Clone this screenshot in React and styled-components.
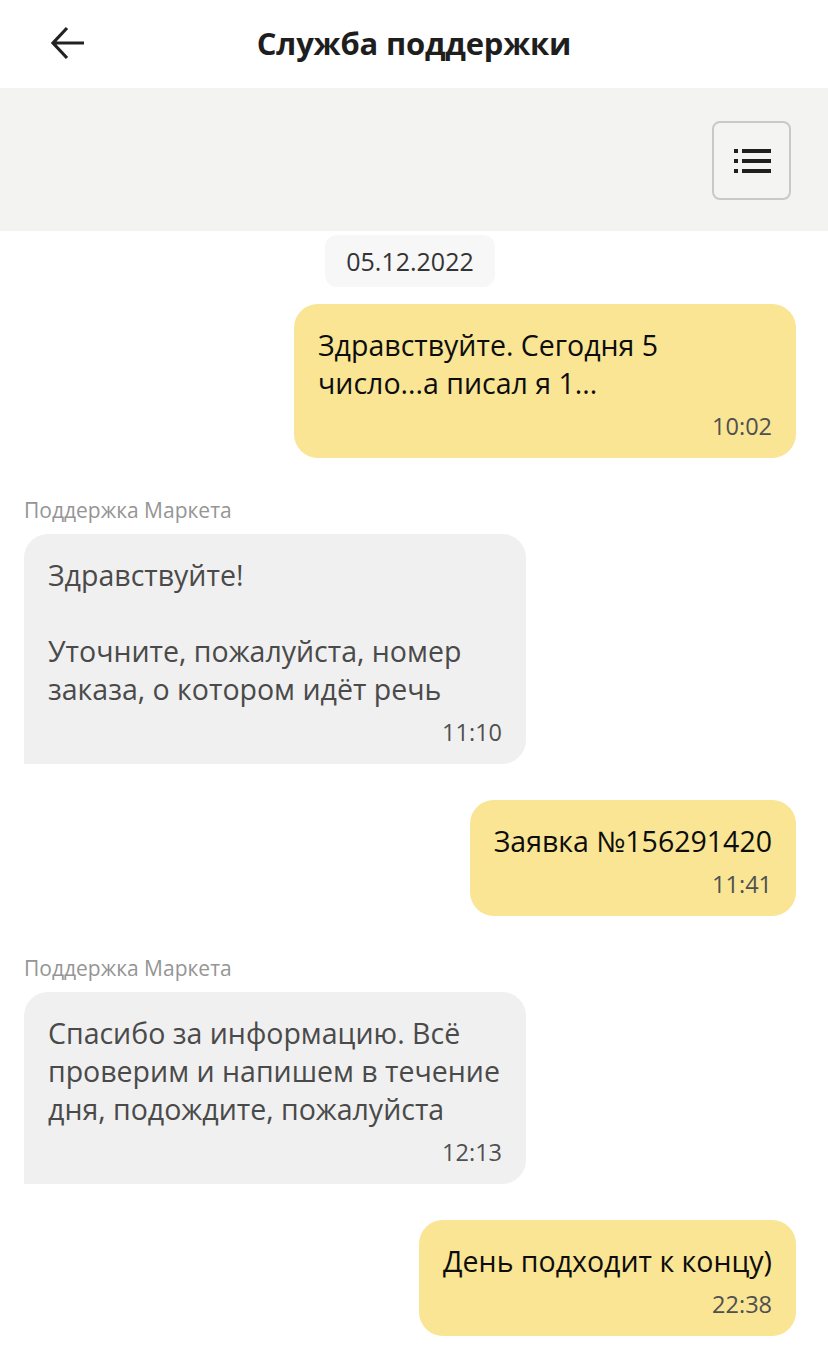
import React from 'react'
import styled, {createGlobalStyle} from 'styled-components'

const GlobalStyle = createGlobalStyle`
  html, body {
    margin: 0;
    padding: 0;
    background: #fff;
  }
  body {
    font-family: "Open Sans", "Noto Sans", sans-serif;
    -webkit-font-smoothing: antialiased;
  }
`

const messages = [
      {id: 1, mine: true, text: 'Здравствуйте. Сегодня 5 число...а писал я 1...', time: '10:02'},
      {id: 2, mine: false, text: 'Здравствуйте!\n\nУточните, пожалуйста, номер заказа, о котором идёт речь', time: '11:10'},
      {id: 3, mine: true, text: 'Заявка №156291420', time: '11:41'},
      {id: 4, mine: false, text: 'Спасибо за информацию. Всё проверим и напишем в течение дня, подождите, пожалуйста', time: '12:13'},
      {id: 5, mine: true, text: 'День подходит к концу)', time: '22:38'},
]

const BackIcon = () => (
      <svg width="36" height="34" viewBox="0 0 36 34" fill="none">
            <path d="M34 17H3M17 2L3 17l14 15" stroke="#222" strokeWidth="3.2" strokeLinejoin="miter" />
      </svg>
)

const ListIcon = () => (
      <svg width="38" height="26" viewBox="0 0 38 26" fill="#1f1f1f">
            <rect x="0" y="1" width="4" height="4" />
            <rect x="8" y="1" width="29" height="4" />
            <rect x="0" y="11" width="4" height="4" />
            <rect x="8" y="11" width="29" height="4" />
            <rect x="0" y="21" width="4" height="4" />
            <rect x="8" y="21" width="29" height="4" />
      </svg>
)

const App = () => {
      return (
            <>
                  <GlobalStyle />
                  <Screen>
                        <Header>
                              <BackButton aria-label="Назад">
                                    <BackIcon />
                              </BackButton>
                              <Title>Служба поддержки</Title>
                        </Header>

                        <Toolbar>
                              <MenuButton aria-label="Меню">
                                    <ListIcon />
                              </MenuButton>
                        </Toolbar>

                        <Feed>
                              <DateChip>05.12.2022</DateChip>
                              {messages.map((msg) => (
                                    <MessageGroup key={msg.id} $mine={msg.mine}>
                                          {!msg.mine && <Author>Поддержка Маркета</Author>}
                                          <Bubble $mine={msg.mine}>
                                                <BubbleText $mine={msg.mine}>{msg.text}</BubbleText>
                                                <Time>{msg.time}</Time>
                                          </Bubble>
                                    </MessageGroup>
                              ))}
                        </Feed>
                  </Screen>
            </>
      )
}

const Screen = styled.div`
  width: 828px;
  min-height: 1371px;
  background: #fff;
`

const Header = styled.header`
  position: relative;
  height: 88px;
  display: flex;
  align-items: center;
  justify-content: center;
`

const BackButton = styled.button`
  position: absolute;
  left: 50px;
  top: 26px;
  padding: 0;
  border: none;
  background: none;
  display: flex;
`

const Title = styled.h1`
  margin: 0 0 2px;
  font-size: 31px;
  font-weight: 700;
  color: #1e1e1e;
  letter-spacing: -0.2px;
`

const Toolbar = styled.div`
  height: 143px;
  background: #f3f3f2;
  display: flex;
  justify-content: flex-end;
  align-items: flex-start;
  padding: 33px 37px 0 0;
  box-sizing: border-box;
`

const MenuButton = styled.button`
  width: 79px;
  height: 79px;
  border: 2px solid #c9c9c9;
  border-radius: 8px;
  background: #f4f4f3;
  display: flex;
  align-items: center;
  justify-content: center;
  padding: 0 0 0 2px;
`

const Feed = styled.main`
  display: flex;
  flex-direction: column;
  padding: 4px 32px 40px 24px;
  gap: 36px;
`

const DateChip = styled.div`
  align-self: center;
  margin: 0 0 -19px 0;
  padding: 0 21px;
  height: 52px;
  line-height: 52px;
  border-radius: 12px;
  background: #f7f7f7;
  color: #333;
  font-size: 25px;
`

const MessageGroup = styled.div`
  display: flex;
  flex-direction: column;
  align-items: ${(p) => (p.$mine ? 'flex-end' : 'flex-start')};
`

const Author = styled.div`
  font-size: 21px;
  color: #959595;
  margin: 2px 0 10px;
  line-height: 28px;
`

const Bubble = styled.div`
  max-width: 502px;
  box-sizing: border-box;
  padding: 22px 24px 18px;
  background: ${(p) => (p.$mine ? '#f9e594' : '#f0f0f0')};
  border-radius: ${(p) => (p.$mine ? '24px' : '24px 24px 24px 0')};
  display: flex;
  flex-direction: column;
  ${(p) => !p.$mine && 'width: 502px;'}
`

const BubbleText = styled.div`
  font-size: 28.5px;
  line-height: 38px;
  white-space: pre-line;
  color: ${(p) => (p.$mine ? '#0d0d0d' : '#4a4a4a')};
`

const Time = styled.div`
  align-self: flex-end;
  margin-top: 10px;
  font-size: 23.5px;
  line-height: 28px;
  color: #505050;
`

export default App
